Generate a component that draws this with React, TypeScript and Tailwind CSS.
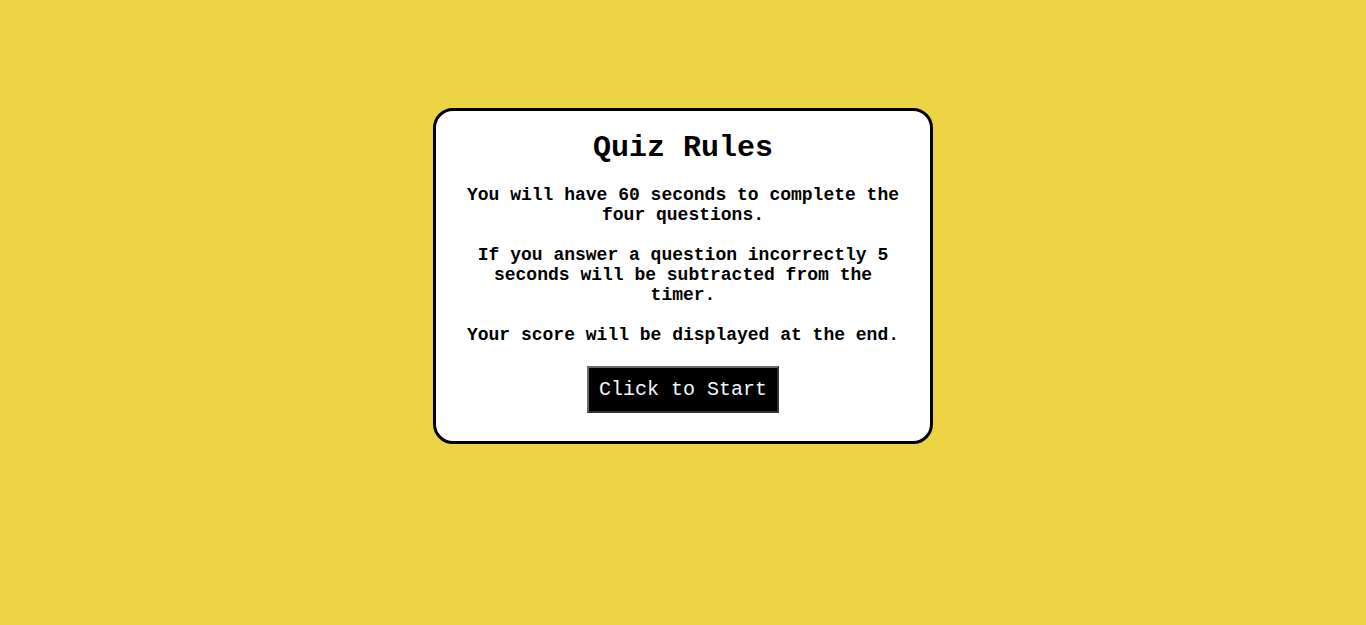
export default function App() {
  return (
    <main className="min-h-[625px] bg-[#ebd344] flex justify-center pt-[108px]" style={{ fontFamily: '"Liberation Mono", "Courier New", monospace' }}>
      <section className="w-[500px] h-[336px] bg-white border-[3px] border-black rounded-[20px] px-[25px] pt-[20px] text-center text-black">
        <h1 className="text-[30px] leading-[34px] font-bold">Quiz Rules</h1>
        <div className="mt-[20px] text-[18px] leading-[20px] font-bold flex flex-col gap-[20px]">
          <p>You will have 60 seconds to complete the four questions.</p>
          <p>If you answer a question incorrectly 5 seconds will be subtracted from the timer.</p>
          <p>Your score will be displayed at the end.</p>
        </div>
        <button className="mt-[21px] bg-black text-[#f0f8ff] text-[20px] leading-[23px] px-[10px] py-[10px] border-2 border-[#6b6b6b] border-r-[#333] border-b-[#333]">
          Click to Start
        </button>
      </section>
    </main>
  )
}
